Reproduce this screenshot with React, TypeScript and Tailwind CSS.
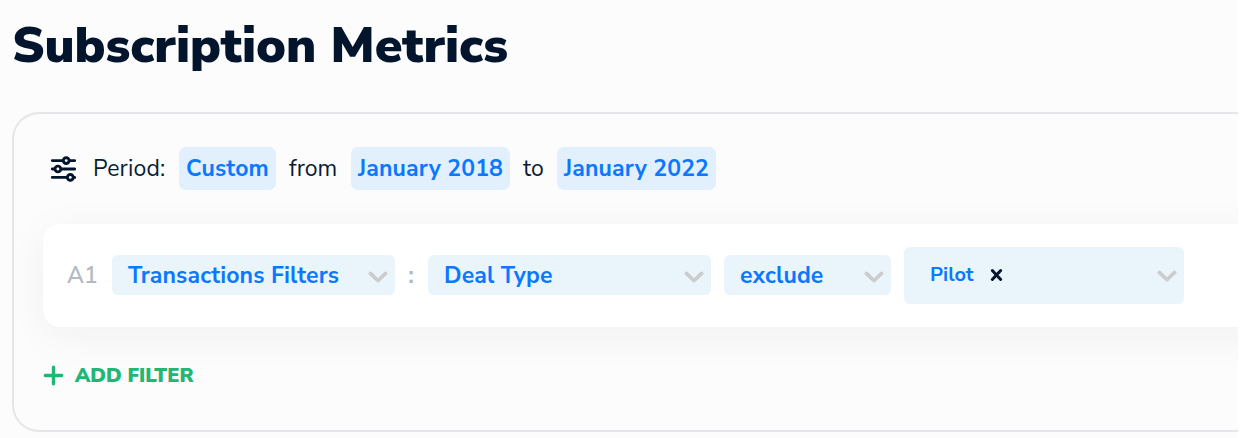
import clsx from "clsx";

const SlidersIcon = () => (
  <svg width="26" height="26" viewBox="0 0 26 26" fill="none" stroke="#03152d" strokeWidth="2.9" strokeLinecap="round">
    <path d="M2.3 4.6H12.4M20.2 4.6H24.6M2.3 13H3.6M12 13H24.6M2.3 21.4H16.4M24.2 21.4H24.6" />
    <circle cx="16.2" cy="4.6" r="2.9" />
    <circle cx="7.9" cy="13" r="2.9" />
    <circle cx="20.3" cy="21.4" r="2.9" />
  </svg>
);

const Chevron = () => (
  <svg width="20" height="14" viewBox="0 0 20 14" fill="none" stroke="#cccccc" strokeWidth="3.6" strokeLinecap="round" strokeLinejoin="round">
    <path d="M2.4 3.4L10 10.8L17.6 3.4" />
  </svg>
);

const Pill = ({ label, className }: { label: string; className: string }) => (
  <button
    className={clsx(
      "flex h-[43px] items-center justify-center rounded-[7px] bg-[#e2effc] pt-[2px] font-bold tracking-[0.15px] whitespace-nowrap text-[#0a78ff]",
      className
    )}
  >
    {label}
  </button>
);

const Select = ({ label, className }: { label: string; className: string }) => (
  <button
    className={clsx(
      "flex h-10 items-center justify-between rounded-[6px] bg-[#eaf4fb] pr-[7px] pl-4 font-bold tracking-[0.15px] whitespace-nowrap text-[#0a78ff]",
      className
    )}
  >
    <span className="pt-[2px]">{label}</span>
    <span className="pt-1">
      <Chevron />
    </span>
  </button>
);

const PeriodRow = () => (
  <div className="flex h-[43px] items-center pl-[36px] whitespace-nowrap">
    <SlidersIcon />
    <span className="ml-[17px] w-[86px] pt-[2px] tracking-[0.15px]">Period:</span>
    <Pill label="Custom" className="w-[97px]" />
    <span className="ml-[13px] w-[62px] pt-[2px]">from</span>
    <Pill label="January 2018" className="w-[159px]" />
    <span className="ml-[13px] w-[34px] pt-[2px]">to</span>
    <Pill label="January 2022" className="w-[159px]" />
  </div>
);

const FilterRow = () => (
  <div className="mt-[34px] -mr-20 ml-[29px] flex h-[103px] items-center rounded-[17px] bg-white pb-px pl-6 shadow-[0_8px_40px_rgba(10,30,25,0.05)]">
    <span className="w-[45px] pt-[2px] font-semibold text-[#b4bac3]">A1</span>
    <Select label="Transactions Filters" className="w-[283px]" />
    <span className="w-[32px] pt-[2px] text-center font-bold text-[#b4bac3]">:</span>
    <Select label="Deal Type" className="ml-px w-[283px]" />
    <Select label="exclude" className="ml-[13px] w-[167px]" />
    <div className="ml-[13px] flex h-[57px] w-[280px] items-center rounded-[6px] bg-[#eaf4fb] pr-[7px] pl-[26px]">
      <span className="text-[20px] font-bold text-[#0a78ff]">Pilot</span>
      <svg className="ml-4" width="13" height="14" viewBox="0 0 13 14" fill="none" stroke="#03152d" strokeWidth="3" strokeLinecap="round">
        <path d="M2.3 2.5L10.7 11.5M10.7 2.5L2.3 11.5" />
      </svg>
      <span className="ml-auto pt-[2px]">
        <Chevron />
      </span>
    </div>
  </div>
);

const AddFilter = () => (
  <button className="mt-[34px] ml-[29px] flex h-7 items-center text-[20px] font-black whitespace-nowrap text-[#22b573]">
    <svg width="21" height="21" viewBox="0 0 21 21" fill="none" stroke="#22b573" strokeWidth="3.4" strokeLinecap="round">
      <path d="M2.3 10.5H18.7M10.5 2.3V18.7" />
    </svg>
    <span className="ml-[11px] pt-px">ADD FILTER</span>
  </button>
);

const App = () => {
  return (
    <div className="h-[438px] w-[1238px] overflow-hidden bg-[#fcfcfc] font-['Nunito_Sans','Nunito','Lato',sans-serif] text-[23px] text-[#0b1c33]">
      <h1 className="h-[112px] pt-[11px] pl-3 text-[50px] leading-[70px] font-black tracking-[-0.05px] whitespace-nowrap text-[#03152d]">
        Subscription Metrics
      </h1>
      <section className="ml-3 h-[320px] rounded-l-[27px] border-2 border-r-0 border-[#e5e6e9] pt-[33px]">
        <PeriodRow />
        <FilterRow />
        <AddFilter />
      </section>
    </div>
  );
};

export default App;
